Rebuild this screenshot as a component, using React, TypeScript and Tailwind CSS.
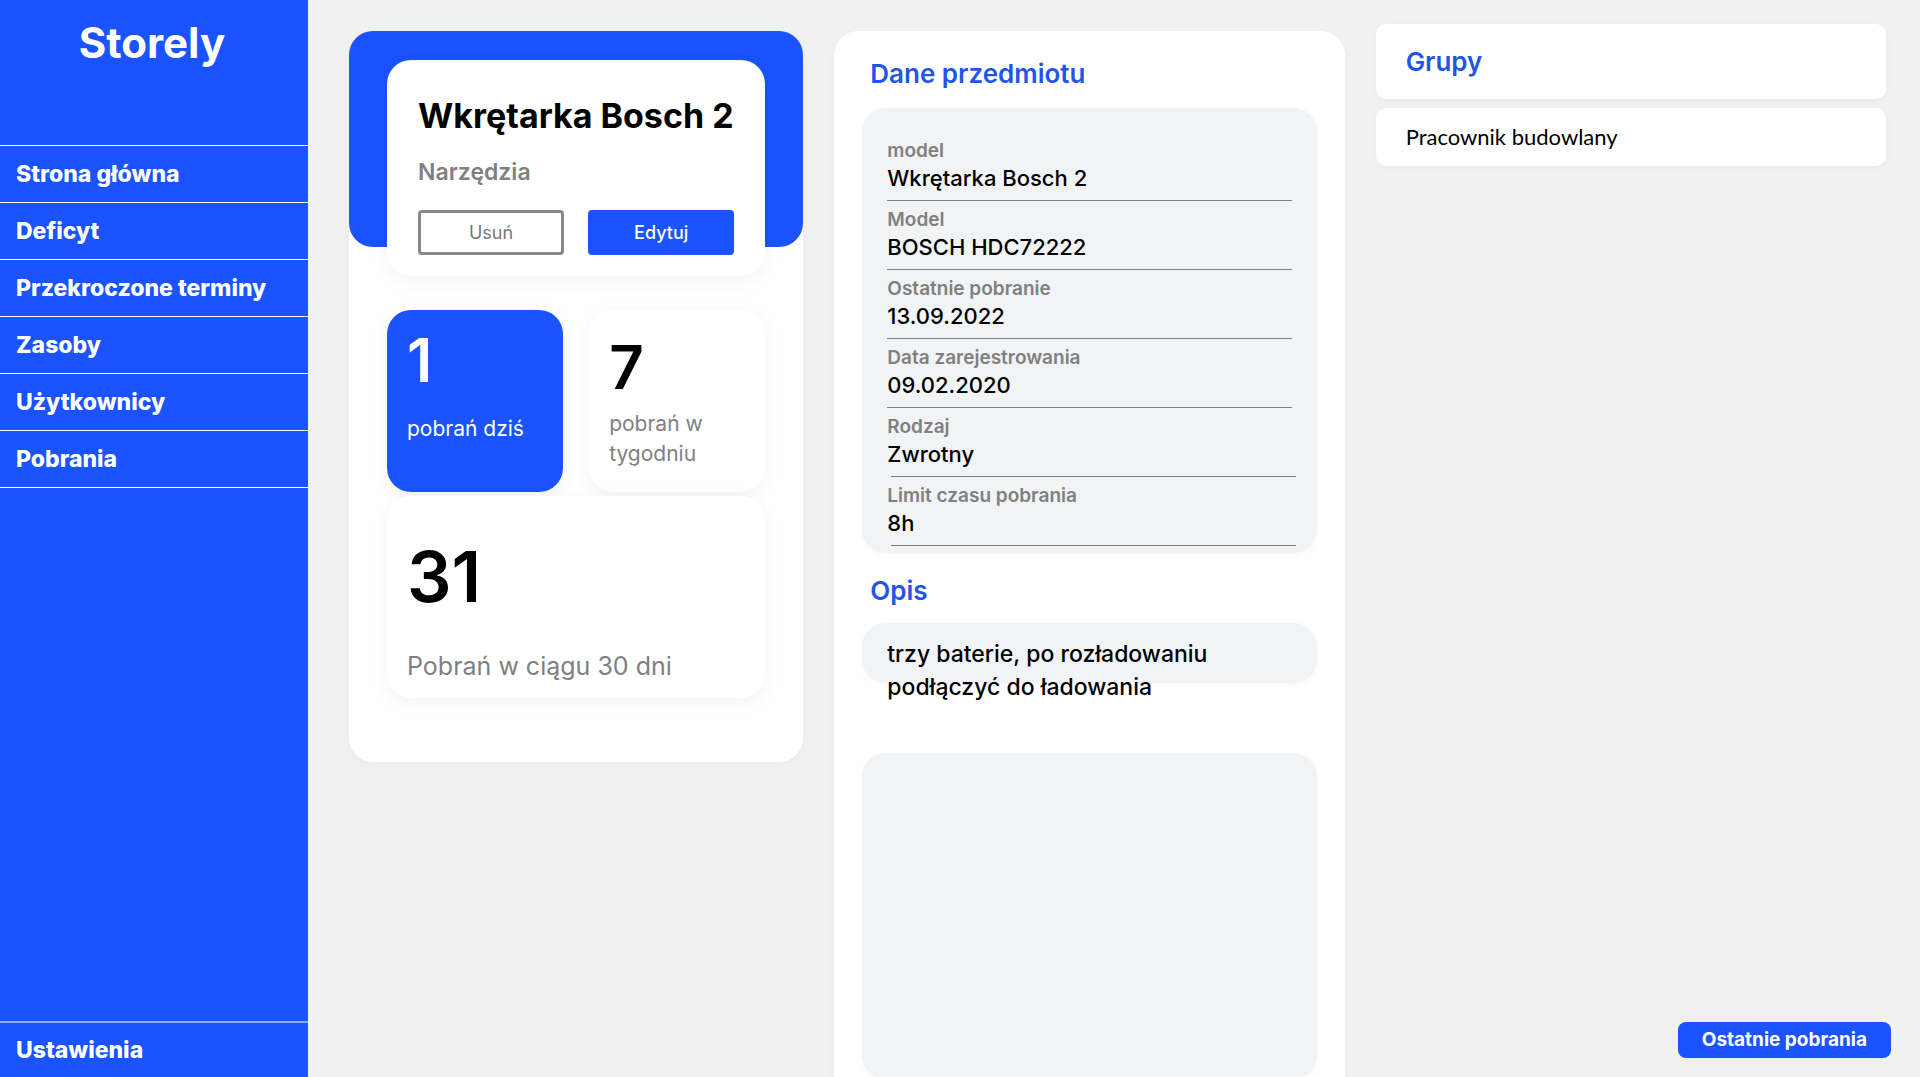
import React from "react";

const navItems = [
  "Strona główna",
  "Deficyt",
  "Przekroczone terminy",
  "Zasoby",
  "Użytkownicy",
  "Pobrania",
];

const details = [
  { label: "model", value: "Wkrętarka Bosch 2", inset: false },
  { label: "Model", value: "BOSCH HDC72222", inset: false },
  { label: "Ostatnie pobranie", value: "13.09.2022", inset: false },
  { label: "Data zarejestrowania", value: "09.02.2020", inset: false },
  { label: "Rodzaj", value: "Zwrotny", inset: true },
  { label: "Limit czasu pobrania", value: "8h", inset: true },
];

const softShadow = "shadow-[0_4px_20px_rgba(0,0,0,0.05)]";

function Sidebar() {
  return (
    <aside className="flex w-[308px] shrink-0 flex-col bg-[#1a53ff] text-white">
      <div className="h-[145px] pt-4 pr-1 text-center text-[42px] leading-[54px] font-bold">
        Storely
      </div>
      <nav className="flex grow flex-col text-[23px] font-extrabold">
        <ul className="border-t border-white">
          {navItems.map((item) => (
            <li key={item} className="border-b border-white">
              <a href="#" className="block pl-4 leading-[56px]">
                {item}
              </a>
            </li>
          ))}
        </ul>
        <a
          href="#"
          className="mt-auto block border-t-2 border-[#8ca9ff] pl-4 leading-[54px]"
        >
          Ustawienia
        </a>
      </nav>
    </aside>
  );
}

function ItemCard() {
  return (
    <section className="self-start rounded-3xl bg-white pb-16 shadow-[0_2px_8px_rgba(0,0,0,0.03)]">
      <div className="h-[216px] rounded-3xl bg-[#1a53ff] px-[38px] pt-[29px]">
        <div className={`h-[216px] rounded-3xl bg-white px-[31px] pt-8 ${softShadow}`}>
          <h1 className="text-[34px] leading-[48px] font-bold whitespace-nowrap">
            Wkrętarka Bosch 2
          </h1>
          <p className="mt-4 text-[23px] leading-[32px] font-semibold text-[#808080]">Narzędzia</p>
          <div className="mt-[22px] grid grid-cols-2 gap-6">
            <button className="h-[45px] rounded border-3 border-[#888] text-lg text-[#777]">
              Usuń
            </button>
            <button className="h-[45px] rounded bg-[#1a53ff] text-lg font-medium text-white">
              Edytuj
            </button>
          </div>
        </div>
      </div>
      <div className="mt-[63px] grid grid-cols-2 gap-x-[26px] gap-y-1 px-[38px]">
        <div className={`h-[182px] rounded-3xl bg-[#1a53ff] pt-4 pl-5 text-white ${softShadow}`}>
          <p className="text-[60px] leading-[68px] font-semibold">1</p>
          <p className="mt-5 text-[21px] leading-[30px]">pobrań dziś</p>
        </div>
        <div className={`h-[182px] rounded-3xl bg-white px-5 pt-[23px] ${softShadow}`}>
          <p className="text-[60px] leading-[68px] font-semibold">7</p>
          <p className="mt-2 text-[21px] leading-[30px] text-[#808080]">pobrań w tygodniu</p>
        </div>
        <div className={`col-span-2 h-[202px] rounded-3xl bg-white pt-8 pl-5 ${softShadow}`}>
          <p className="text-[70px] leading-[98px] font-semibold">31</p>
          <p className="mt-[22px] text-[25px] leading-[36px] text-[#808080]">
            Pobrań w ciągu 30 dni
          </p>
        </div>
      </div>
    </section>
  );
}

function DetailsCard() {
  return (
    <section className="min-h-screen rounded-3xl bg-white px-7 pt-[25px] pb-16 shadow-[0_2px_8px_rgba(0,0,0,0.03)]">
      <h2 className="pl-2 text-[26px] leading-[36px] font-semibold text-[#1f55e8]">
        Dane przedmiotu
      </h2>
      <ul className="mt-4 rounded-3xl bg-[#f1f3f5] px-[25px] pt-6 pb-[7px] shadow-[0_2px_6px_rgba(0,0,0,0.03)]">
        {details.map((row) => (
          <li key={row.label}>
            <p className="pt-[6px] text-[19px] leading-[26px] font-semibold text-[#808080]">
              {row.label}
            </p>
            <p className="pb-2 text-[22px] leading-[28px] font-medium">{row.value}</p>
            <hr className={row.inset ? "-mr-1 ml-1 border-[#808080]" : "border-[#808080]"} />
          </li>
        ))}
      </ul>
      <h2 className="mt-5 pl-2 text-[26px] leading-[36px] font-semibold text-[#1f55e8]">
        Opis
      </h2>
      <div className="mt-[14px] h-[60px] rounded-3xl bg-[#f1f3f5] px-[25px] pt-[15px] shadow-[0_2px_6px_rgba(0,0,0,0.03)]">
        <p className="text-[23px] leading-[33px] font-medium">
          trzy baterie, po rozładowaniu podłączyć do ładowania
        </p>
      </div>
      <div className="mt-[70px] h-[326px] rounded-3xl bg-[#f1f3f5] shadow-[0_2px_6px_rgba(0,0,0,0.03)]" />
    </section>
  );
}

function Groups() {
  return (
    <aside className="-mt-[7px] flex flex-col gap-[9px]">
      <h2 className="rounded-[10px] bg-white px-[30px] text-[26px] leading-[75px] font-semibold text-[#1f55e8] shadow-[0_2px_8px_rgba(0,0,0,0.03)]">
        Grupy
      </h2>
      <p className="rounded-[10px] bg-white px-[30px] font-['Lato',sans-serif] text-[22px] leading-[58px] shadow-[0_2px_8px_rgba(0,0,0,0.03)]">
        Pracownik budowlany
      </p>
    </aside>
  );
}

export default function App() {
  return (
    <div className="flex h-screen overflow-hidden bg-[#f1f1f1] font-['Inter',sans-serif] text-black">
      <Sidebar />
      <main className="relative grid grow grid-cols-[454fr_510fr_510fr] gap-x-[31px] overflow-hidden pt-[31px] pr-[34px] pl-[41px]">
        <ItemCard />
        <DetailsCard />
        <Groups />
        <button className="absolute right-[29px] bottom-[19px] h-9 rounded-lg bg-[#1a53ff] px-6 text-[19px] font-bold text-white">
          Ostatnie pobrania
        </button>
      </main>
    </div>
  );
}
